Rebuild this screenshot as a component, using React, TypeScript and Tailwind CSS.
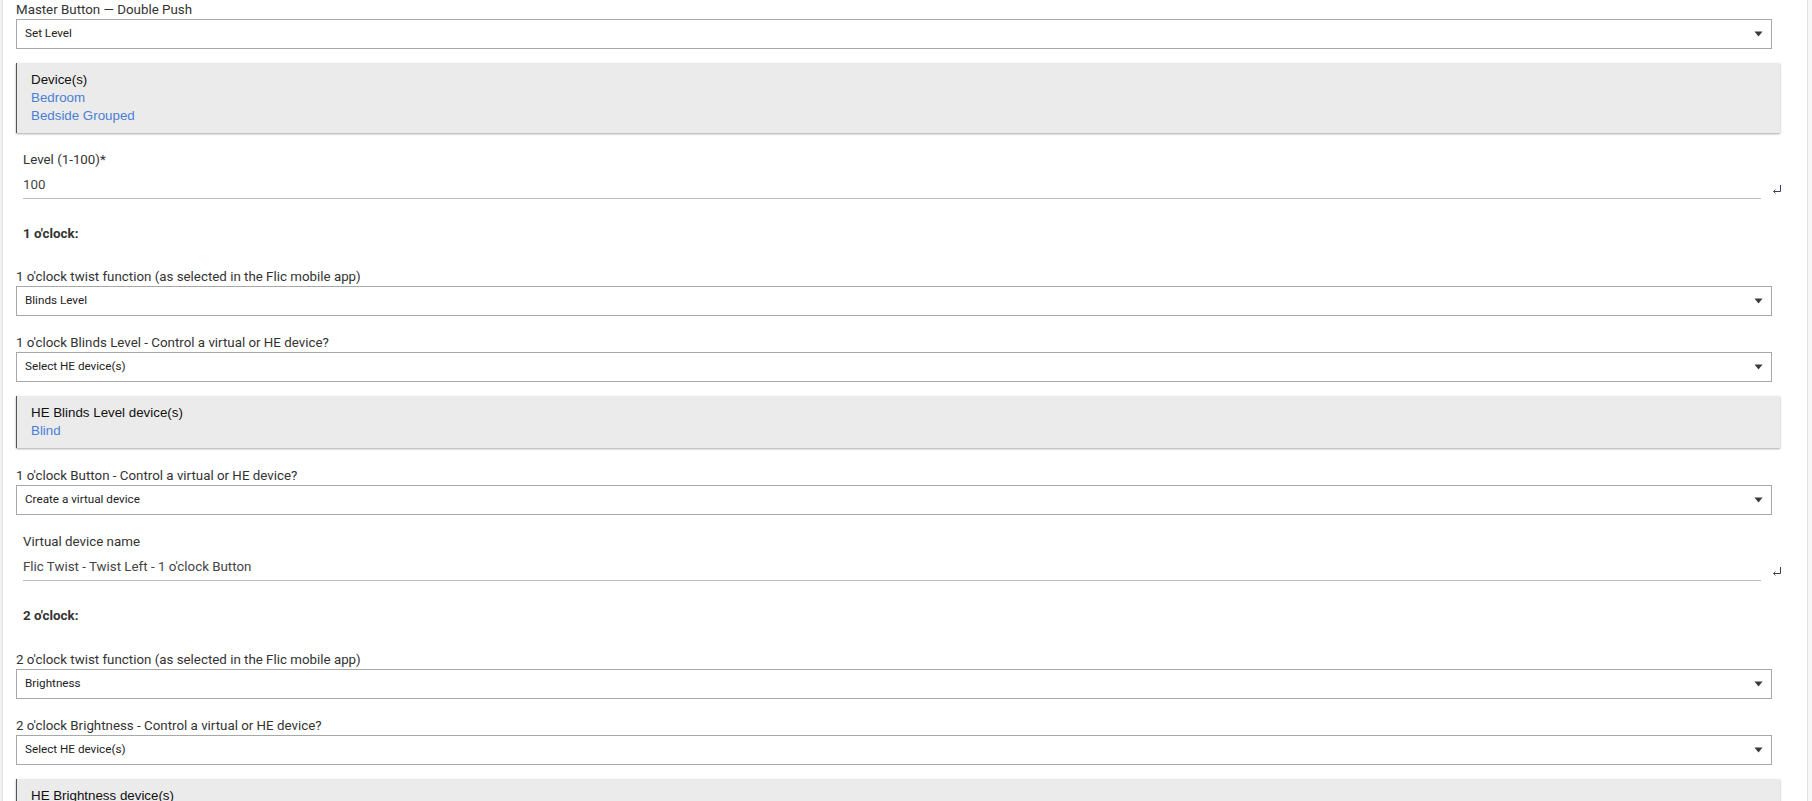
import React from "react";

const font = { fontFamily: "Roboto, 'Liberation Sans', Arial, sans-serif" };
const arial = { fontFamily: "'Liberation Sans', Arial, sans-serif" };

function Arrow() {
  return (
    <svg width="9" height="6" viewBox="0 0 9 6" className="shrink-0">
      <path d="M0.5 0.5 H8.5 L4.5 5.5 Z" fill="#3a3a3a" />
    </svg>
  );
}

function ReturnIcon() {
  return (
    <svg width="10" height="10" viewBox="0 0 10 10" className="shrink-0">
      <path d="M8.5 1 V7.5 H1.5" fill="none" stroke="#34405a" strokeWidth="1" />
      <path d="M3.5 5.5 L1.5 7.5 L3.5 9.5" fill="none" stroke="#6a5a40" strokeWidth="1" />
    </svg>
  );
}

function Label({ children, className = "" }: { children: React.ReactNode; className?: string }) {
  return <div className={`text-[13.33px] leading-[19px] text-[#333333] ${className}`}>{children}</div>;
}

function Select({ value }: { value: string }) {
  return (
    <div className="w-[1756px] h-[30px] border border-[#a8a8a8] bg-white flex items-center justify-between pl-[8px] pr-[8px]">
      <span className="text-[11.7px] text-[#222222]">{value}</span>
      <Arrow />
    </div>
  );
}

function Panel({ title, items }: { title: string; items: string[] }) {
  return (
    <div
      className="mt-[14px] w-[1764px] bg-[#ebebeb] border-l border-[#555555] shadow-[0_1px_2px_rgba(0,0,0,0.35)] pt-[8px] pb-[8px] pl-[14px] text-[13.33px] leading-[18px]"
      style={arial}
    >
      <div className="text-[#111111]">{title}</div>
      {items.map((it) => (
        <div key={it} className="text-[#4a7fd6]">
          {it}
        </div>
      ))}
    </div>
  );
}

function TextInput({ label, value }: { label: string; value: string }) {
  return (
    <div className="mt-[17px] flex items-end">
      <div className="ml-[7px] w-[1738px] border-b border-[#bdbdbd] pb-[4px]">
        <div className="text-[13.33px] leading-[19px] text-[#333333]">{label}</div>
        <div className="mt-[6px] text-[13.33px] leading-[19px] text-[#444444]">{value}</div>
      </div>
      <div className="ml-[11px] mb-[5px]">
        <ReturnIcon />
      </div>
    </div>
  );
}

function Heading({ children }: { children: React.ReactNode }) {
  return <div className="mt-[25px] ml-[7px] text-[13.33px] leading-[19px] font-bold text-[#333333]">{children}</div>;
}

export default function App() {
  return (
    <div className="w-[1812px] h-[801px] overflow-hidden bg-white flex" style={font}>
      <div className="w-[3px] shrink-0 bg-[#f2f2f2] border-r border-[#e2e2e2]" />
      <div className="flex-1 pl-[13px]">
        <Label>Master Button — Double Push</Label>
        <Select value="Set Level" />
        <Panel title="Device(s)" items={["Bedroom", "Bedside Grouped"]} />
        <TextInput label="Level (1-100)*" value="100" />
        <Heading>1 o'clock:</Heading>
        <Label className="mt-[24px]">1 o'clock twist function (as selected in the Flic mobile app)</Label>
        <Select value="Blinds Level" />
        <Label className="mt-[17px]">1 o'clock Blinds Level - Control a virtual or HE device?</Label>
        <Select value="Select HE device(s)" />
        <Panel title="HE Blinds Level device(s)" items={["Blind"]} />
        <Label className="mt-[18px]">1 o'clock Button - Control a virtual or HE device?</Label>
        <Select value="Create a virtual device" />
        <TextInput label="Virtual device name" value="Flic Twist - Twist Left - 1 o'clock Button" />
        <Heading>2 o'clock:</Heading>
        <Label className="mt-[25px]">2 o'clock twist function (as selected in the Flic mobile app)</Label>
        <Select value="Brightness" />
        <Label className="mt-[17px]">2 o'clock Brightness - Control a virtual or HE device?</Label>
        <Select value="Select HE device(s)" />
        <Panel title="HE Brightness device(s)" items={["Bedroom"]} />
      </div>
      <div className="w-[5px] shrink-0 bg-[#f7f7f7] border-l border-[#e0e0e0]" />
    </div>
  );
}
